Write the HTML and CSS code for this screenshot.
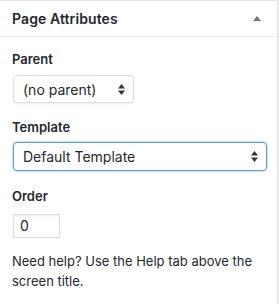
FILE: index.html
```html
<!DOCTYPE html>
<html lang="en">
  <head>
    <meta charset="UTF-8" />
    <title>Page Attributes</title>
    <link rel="stylesheet" href="styles.css">
  </head>
  <body>
    <div class="postbox">
      <div class="postbox-header">
        <h2>Page Attributes</h2>
        <span class="toggle"></span>
      </div>
      <div class="inside">
        <p class="label">Parent</p>
        <div class="select parent">
          <span>(no parent)</span>
          <svg width="7" height="11" viewBox="0 0 7 11"><path d="M3.5 0 L7 4.5 L0 4.5 Z M0 6.5 L7 6.5 L3.5 11 Z" fill="#333"/></svg>
        </div>

        <p class="label">Template</p>
        <div class="select template focused">
          <span>Default Template</span>
          <svg width="7" height="11" viewBox="0 0 7 11"><path d="M3.5 0 L7 4.5 L0 4.5 Z M0 6.5 L7 6.5 L3.5 11 Z" fill="#333"/></svg>
        </div>

        <p class="label">Order</p>
        <div class="order-input">0</div>

        <p class="help">Need help? Use the Help tab above the screen title.</p>
      </div>
    </div>
  </body>
</html>
```

FILE: styles.css
```css
body {
  margin: 0;
  background: #f1f1f1;
  font-family: Inter, Roboto, "Liberation Sans", sans-serif;
  color: #23282d;
}
.postbox {
  background: #fff;
  width: 278px;
  height: 304px;
  border-top: 1px solid #e5e5e5;
  border-right: 1px solid #e5e5e5;
  box-sizing: border-box;
}
.postbox-header {
  display: flex;
  align-items: center;
  justify-content: space-between;
  height: 35px;
  padding: 0 12px;
  border-bottom: 1px solid #eee;
}
.postbox-header h2 {
  margin: 0;
  font-size: 14px;
  font-weight: 600;
  letter-spacing: 0.1px;
}
.toggle {
  width: 0;
  height: 0;
  margin-right: 4px;
  border-left: 4px solid transparent;
  border-right: 4px solid transparent;
  border-bottom: 5px solid #72777c;
}
.inside {
  padding: 0 12px;
}
.label {
  margin: 0;
  font-size: 13px;
  font-weight: 600;
  line-height: 19px;
}
.label:first-child {
  padding-top: 13px;
  margin-bottom: 6px;
}
.select {
  display: flex;
  align-items: center;
  justify-content: space-between;
  box-sizing: border-box;
  height: 28px;
  padding: 0 8px 0 9px;
  margin-left: 1px;
  border: 1px solid #ddd;
  border-radius: 4px;
  box-shadow: 0 1px 2px rgba(0, 0, 0, 0.07);
  font-size: 14px;
}
.select.parent {
  width: 121px;
  margin-bottom: 15px;
}
.select.template {
  width: 254px;
  height: 29px;
  margin-top: 5px;
  margin-bottom: 16px;
}
.select.focused {
  border-color: #5b9dd9;
  box-shadow: 0 0 2px rgba(30, 140, 190, 0.8);
}
.order-input {
  box-sizing: border-box;
  width: 47px;
  height: 24px;
  margin: 8px 0 0 1px;
  padding: 2px 6px;
  border: 1px solid #ddd;
  box-shadow: inset 0 1px 2px rgba(0, 0, 0, 0.07);
  font-size: 14px;
  line-height: 18px;
}
.help {
  margin: 13px 0 0;
  font-size: 13px;
  line-height: 20px;
}
```
